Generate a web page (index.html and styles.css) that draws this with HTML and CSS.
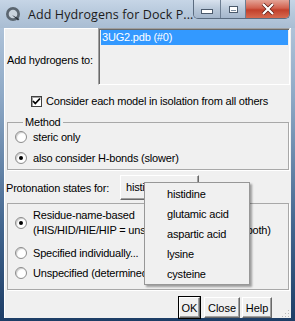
FILE: index.html
```html
<!DOCTYPE html>
<html lang="en">
<head>
    <meta charset="UTF-8">
    <title>Add Hydrogens for Dock Prep</title>
    <link rel="stylesheet" href="styles.css">
</head>
<body>
    <div class="window">
        <div class="titlebar">
            <svg class="app-icon" width="16" height="16" viewBox="0 0 16 16">
                <circle cx="8" cy="8" r="7" fill="#5b6670"/>
                <circle cx="8" cy="8" r="4.3" fill="#c9d3dd"/>
                <path d="M7 9 L13 14.5 L14.5 13 Z" fill="#2d353d"/>
            </svg>
            <span class="title">Add Hydrogens for Dock P...</span>
            <div class="caption-buttons">
                <div class="cap-btn min"><span class="min-glyph"></span></div>
                <div class="cap-btn max"><span class="max-glyph"></span></div>
                <div class="cap-btn close">
                    <svg width="14" height="12" viewBox="0 0 14 12">
                        <path d="M2 1 L12 11 M12 1 L2 11" stroke="#5a1d16" stroke-width="3.6"/>
                        <path d="M2 1 L12 11 M12 1 L2 11" stroke="#fff" stroke-width="2.2"/>
                    </svg>
                </div>
            </div>
        </div>

        <div class="content">
            <div class="target-row">
                <span class="target-label">Add hydrogens to:</span>
                <div class="listbox">
                    <div class="list-item selected">3UG2.pdb (#0)</div>
                </div>
            </div>

            <div class="check-row">
                <span class="checkbox">
                    <svg width="9" height="9" viewBox="0 0 9 9">
                        <path d="M1 4 L3.3 6.5 L8 1.5" fill="none" stroke="#000" stroke-width="1.8"/>
                    </svg>
                </span>
                <span>Consider each model in isolation from all others</span>
            </div>

            <fieldset class="group method">
                <legend>Method</legend>
                <div class="radio-row first"><span class="radio"></span><span>steric only</span></div>
                <div class="radio-row"><span class="radio on"></span><span>also consider H-bonds (slower)</span></div>
            </fieldset>

            <div class="proton-row">
                <span class="proton-label">Protonation states for:</span>
                <div class="menubutton">histidine</div>
            </div>

            <div class="group states">
                <div class="radio-row tall">
                    <span class="radio on"></span>
                    <span>Residue-name-based<br>(HIS/HID/HIE/HIP = unspecified/delta/epsilon/both)</span>
                </div>
                <div class="radio-row"><span class="radio"></span><span>Specified individually...</span></div>
                <div class="radio-row"><span class="radio"></span><span>Unspecified (determined by method)</span></div>
            </div>

            <div class="button-row">
                <button class="btn default">OK</button>
                <button class="btn close-btn">Close</button>
                <button class="btn help-btn">Help</button>
                <svg class="grip" width="10" height="10" viewBox="0 0 10 10">
                    <g fill="#b8b8b8">
                        <rect x="8" y="2" width="1" height="1"/>
                        <rect x="5" y="5" width="1" height="1"/>
                        <rect x="8" y="5" width="1" height="1"/>
                        <rect x="2" y="8" width="1" height="1"/>
                        <rect x="5" y="8" width="1" height="1"/>
                        <rect x="8" y="8" width="1" height="1"/>
                    </g>
                </svg>
            </div>

            <ul class="popup-menu">
                <li>histidine</li>
                <li>glutamic acid</li>
                <li>aspartic acid</li>
                <li>lysine</li>
                <li>cysteine</li>
            </ul>
        </div>
    </div>
</body>
</html>
```

FILE: styles.css
```css
body { margin: 0; background: #fff; font-family: "Liberation Sans", Arial, sans-serif; font-size: 11px; letter-spacing: -0.2px; color: #000; }
.window { width: 295px; height: 321px; display: flex; flex-direction: column; box-sizing: border-box; padding: 0 4px 3px 4px; background: linear-gradient(180deg, #bccde0 0%, #8ea9c6 30%, #43668f 70%, #1d3d66 100%); }

.titlebar { height: 28px; flex: none; display: flex; align-items: flex-start; margin: 0 -4px; padding: 0 4px; background: linear-gradient(180deg, #c6d5e6 0%, #b7c9dc 45%, #a9bdd3 100%); letter-spacing: 0; }
.app-icon { margin: 6px 7px 0 1px; flex: none; }
.title { margin-top: 6px; font-family: "Open Sans", "Liberation Sans", sans-serif; font-size: 12.5px; color: #1b1b1b; white-space: nowrap; letter-spacing: 0.1px; }
.caption-buttons { margin-left: auto; display: flex; height: 18px; border: 1px solid #5b6c80; border-top: none; border-radius: 0 0 5px 5px; overflow: hidden; margin-right: 1px; }
.cap-btn { display: flex; align-items: center; justify-content: center; height: 18px; }
.cap-btn.min { width: 27px; }
.cap-btn.max { width: 25px; }
.cap-btn.min, .cap-btn.max { background: linear-gradient(180deg, #d8e2ee 0%, #b9c8d9 50%, #a4b6cb 100%); border-right: 1px solid #6d7e92; }
.cap-btn.close { width: 45px; background: linear-gradient(180deg, #e4a497 0%, #d2614e 45%, #c2402b 55%, #d66a4f 100%); }
.min-glyph { width: 10px; height: 3px; margin-top: 5px; background: #fff; border: 1px solid #4b5a6c; }
.max-glyph { width: 7px; height: 5px; border: 1px solid #4b5a6c; box-shadow: inset 0 0 0 1px #fff, inset 0 2px 0 1px #fff; background: #7b8c9f; }

.content { flex: 1; position: relative; display: flex; flex-direction: column; background: #f0f0f0; border-top: 1px solid #fff; border-left: 1px solid #fff; }

.target-row { display: flex; align-items: flex-start; height: 57px; }
.target-label { padding: 25px 0 0 2px; }
.listbox { margin-left: auto; margin-right: 1px; width: 192px; height: 57px; box-sizing: border-box; margin-top: -1px; border: 1px solid; border-color: #a0a0a0 #fff #fff #a0a0a0; box-shadow: inset 1px 1px 0 #696969; padding: 1px 1px 0 2px; }
.list-item { height: 15px; line-height: 15px; padding-left: 1px; }
.list-item.selected { background: #3399ff; color: #fff; }

.check-row { display: flex; align-items: center; gap: 4px; padding-left: 26px; margin-top: 8px; height: 14px; }
.checkbox { width: 11px; height: 11px; box-sizing: border-box; border: 1px solid #404040; background: #fff; display: flex; align-items: center; justify-content: center; box-shadow: inset 1px 1px 0 #a0a0a0; }

.group { margin: 0 2px 0 2px; border: 1px solid #a8a8a8; box-shadow: 1px 1px 0 #fff; }
fieldset.group { padding: 0 0 0 7px; min-width: 0; }
.method { margin-top: 7px; height: 55px; box-sizing: border-box; }
.method legend { margin-left: 8px; padding: 0 2px; line-height: 14px; }
.method .radio-row { height: 21px; }
.method .radio-row.first { height: 20px; margin-top: -2px; }

.radio-row { display: flex; align-items: center; gap: 6px; white-space: nowrap; }
.radio { flex: none; width: 12px; height: 12px; box-sizing: border-box; border-radius: 50%; border: 1px solid #8d8d8d; background: radial-gradient(circle at 60% 60%, #fff 40%, #e2e2e2 100%); display: flex; align-items: center; justify-content: center; box-shadow: inset 1px 1px 0 #d0d0d0; }
.radio.on::after { content: ""; width: 4px; height: 4px; border-radius: 50%; background: #000; }

.proton-row { display: flex; align-items: center; height: 25px; margin-top: 5px; }
.proton-label { width: 113px; padding-left: 1px; flex: none; }
.menubutton { margin-left: 1px; width: 79px; height: 25px; box-sizing: border-box; border: 1px solid; border-color: #fff #696969 #696969 #fff; box-shadow: inset -1px -1px 0 #a0a0a0; padding: 5px 0 0 5px; overflow: hidden; }

.states { margin-top: 3px; height: 87px; box-sizing: border-box; padding: 4px 0 0 7px; }
.states .radio-row { height: 20px; }
.states .radio-row.tall { height: 30px; line-height: 15px; margin-bottom: 5px; }

.button-row { display: flex; align-items: flex-end; justify-content: flex-end; gap: 2px; margin-top: auto; height: 24px; }
.btn { font: inherit; font-size: 11px; color: #000; height: 21px; padding: 0; background: #f0f0f0; border: 1px solid; border-color: #fff #696969 #696969 #fff; box-shadow: inset -1px -1px 0 #a0a0a0; }
.btn.default { width: 21px; outline: 1px solid #000; margin-right: 2px; }
.btn.close-btn { width: 36px; }
.btn.help-btn { width: 30px; }
.grip { margin-left: 6px; margin-right: 1px; }

.popup-menu { position: absolute; left: 139px; top: 153px; width: 104px; margin: 0; padding: 1px 0 0 0; list-style: none; background: #f0f0f0; border: 1px solid #979797; box-shadow: 2px 2px 2px rgba(0, 0, 0, 0.35); }
.popup-menu li { height: 20px; line-height: 20px; padding-left: 22px; }
```
